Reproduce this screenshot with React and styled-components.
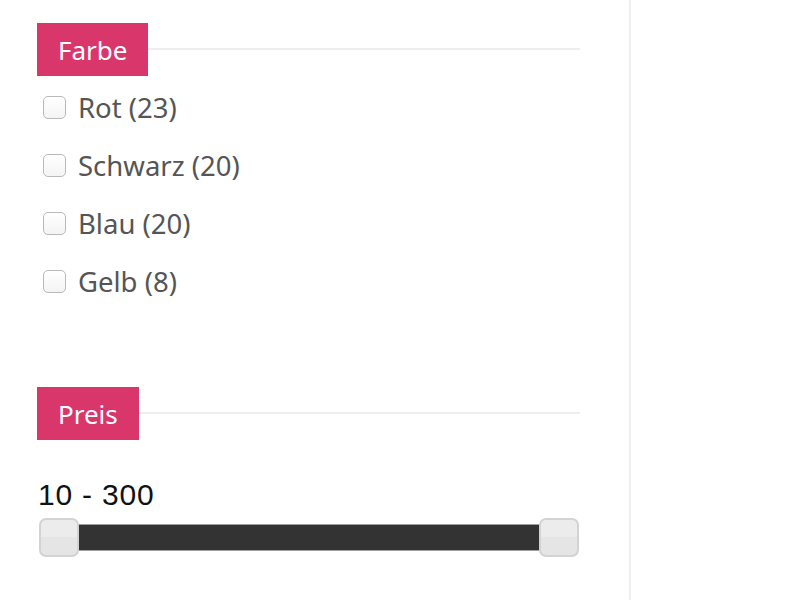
import React from "react";
import styled, { createGlobalStyle } from "styled-components";

const GlobalStyle = createGlobalStyle`
  html, body {
    margin: 0;
    padding: 0;
    background: #fff;
  }
  body {
    font-family: "Noto Sans", "Open Sans", sans-serif;
  }
`;

const Page = styled.div`
  display: flex;
  height: 600px;
`;

const Sidebar = styled.aside`
  width: 543px;
  padding: 23px 49px 0 37px;
  border-right: 2px solid #eeeeee;
`;

const Section = styled.section`
  margin-bottom: ${(p) => p.$gap || 0}px;
`;

const Header = styled.div`
  display: flex;
  align-items: center;
`;

const Label = styled.h3`
  margin: 0;
  height: 53px;
  padding: 0 21px;
  display: flex;
  align-items: center;
  background: #d9366c;
  color: #fff;
  font-size: 26px;
  font-weight: 400;
`;

const Rule = styled.div`
  flex: 1;
  height: 2px;
  margin-top: -1px;
  background: #eeeeee;
`;

const List = styled.ul`
  list-style: none;
  margin: 2px 0 0;
  padding: 0;
`;

const Row = styled.li`
  height: 58px;
  display: flex;
  align-items: center;
  gap: 12px;
  padding-left: 6px;
  color: #555;
  font-size: 27.5px;
`;

const Box = styled.span`
  width: 23px;
  height: 23px;
  border: 1px solid #b9b9b9;
  border-radius: 5px;
  background: linear-gradient(#fff, #f4f4f4);
  box-sizing: border-box;
  flex-shrink: 0;
`;

const Range = styled.div`
  margin-top: 37px;
  font-family: "Liberation Sans", Arial, sans-serif;
  font-size: 30px;
  letter-spacing: 0.8px;
  color: #111;
  padding-left: 1px;
  line-height: 36px;
`;

const Slider = styled.div`
  position: relative;
  margin: 11px 2px 0 3px;
  height: 27px;
  background: #333;
  border: 1px solid #a0a0a0;
  box-sizing: border-box;
`;

const Handle = styled.span`
  position: absolute;
  top: -7px;
  ${(p) => (p.$end ? "right: -2px;" : "left: -2px;")}
  width: 40px;
  height: 39px;
  box-sizing: border-box;
  border: 2px solid #d3d3d3;
  border-radius: 7px;
  background: linear-gradient(#ececec 50%, #e5e5e5 50%);
`;

const colors = [
  ["Rot", 23],
  ["Schwarz", 20],
  ["Blau", 20],
  ["Gelb", 8],
];

export default function App() {
  return (
    <Page>
      <GlobalStyle />
      <Sidebar>
        <Section $gap={77}>
          <Header>
            <Label>Farbe</Label>
            <Rule />
          </Header>
          <List>
            {colors.map(([name, n]) => (
              <Row key={name}>
                <Box />
                {name} ({n})
              </Row>
            ))}
          </List>
        </Section>
        <Section>
          <Header>
            <Label>Preis</Label>
            <Rule />
          </Header>
          <Range>10 - 300</Range>
          <Slider>
            <Handle />
            <Handle $end />
          </Slider>
        </Section>
      </Sidebar>
    </Page>
  );
}
